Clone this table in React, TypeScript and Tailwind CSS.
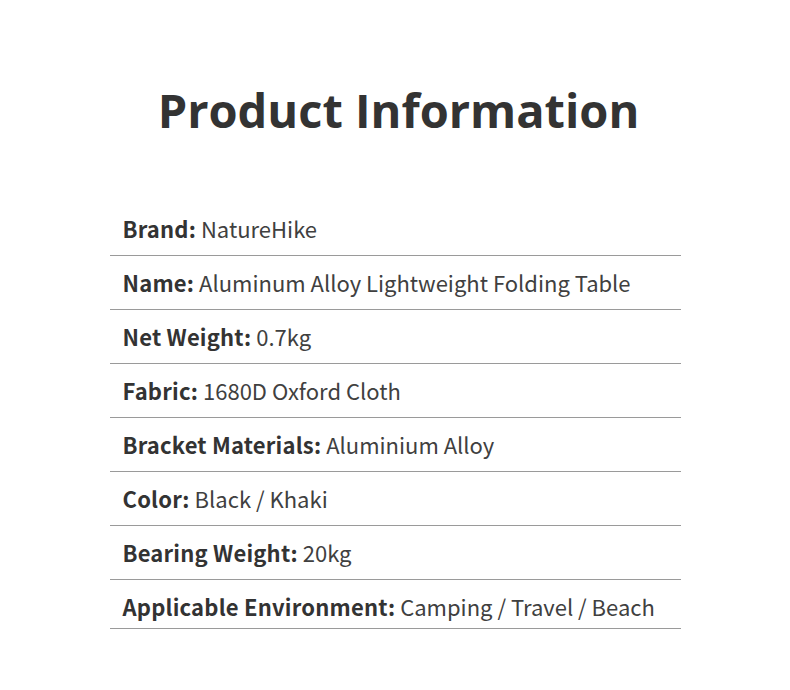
import React from 'react';

const specs = [
  { label: 'Brand', value: 'NatureHike' },
  { label: 'Name', value: 'Aluminum Alloy Lightweight Folding Table' },
  { label: 'Net Weight', value: '0.7kg' },
  { label: 'Fabric', value: '1680D Oxford Cloth' },
  { label: 'Bracket Materials', value: 'Aluminium Alloy' },
  { label: 'Color', value: 'Black / Khaki' },
  { label: 'Bearing Weight', value: '20kg' },
  { label: 'Applicable Environment', value: 'Camping / Travel / Beach' },
];

export default function App() {
  return (
    <div className="w-[790px] h-[690px] bg-white text-[#333333] pt-[87px]">
      <h1 className="text-center pl-[7px] font-['Open_Sans',sans-serif] font-bold text-[47px] leading-none h-[47px]">
        Product Information
      </h1>
      <div className="w-[571px] mx-auto mt-[68px] font-['Noto_Sans_CJK_SC','Noto_Sans',sans-serif] text-[22px] leading-[22px]">
        {specs.map((s, i) => (
          <div
            key={s.label}
            className={`border-b border-[#9a9a9a] pt-[15px] pl-[13px] ${i === specs.length - 1 ? 'h-[49px]' : 'h-[54px]'}`}
          >
            <span className="font-bold tracking-[0.2px]">{s.label}:</span>{' '}
            <span className="text-[#404040]">{s.value}</span>
          </div>
        ))}
      </div>
    </div>
  );
}
